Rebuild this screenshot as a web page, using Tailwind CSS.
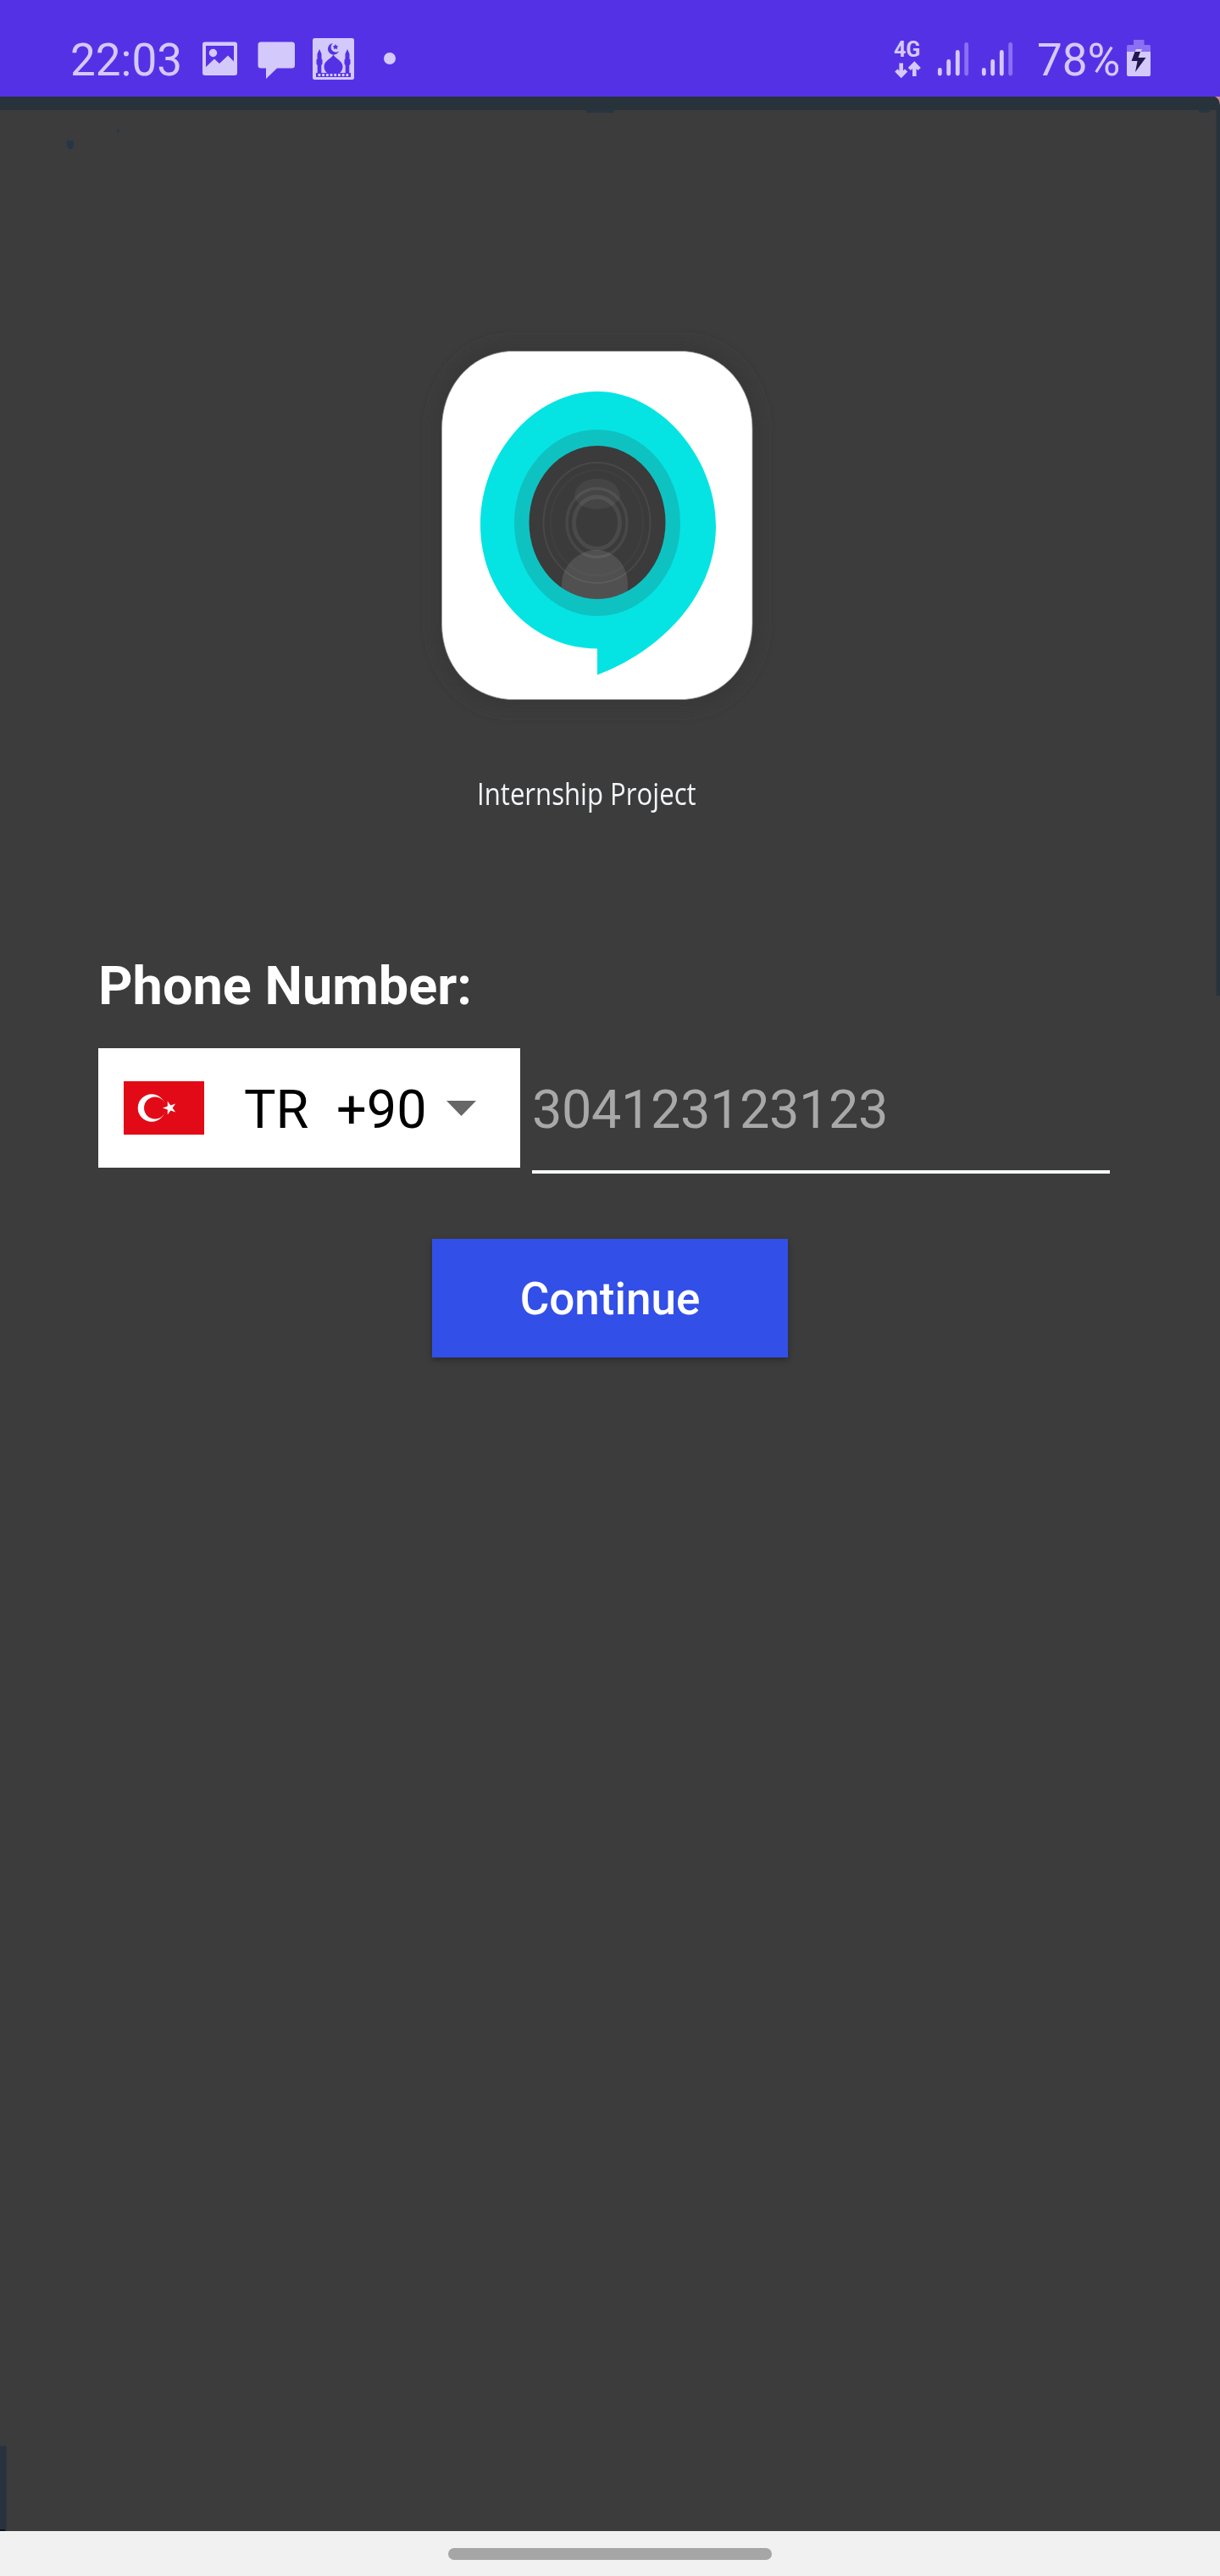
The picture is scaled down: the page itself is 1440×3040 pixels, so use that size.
<!DOCTYPE html>
<html lang="en">
<head>
<meta charset="utf-8">
<title>Internship Project</title>
<script src="https://cdn.jsdelivr.net/npm/@tailwindcss/browser@4"></script>
</head>
<body class="w-[1440px] h-[3040px] flex flex-col overflow-hidden bg-[#3c3c3c] font-['Roboto',sans-serif]">
<header class="h-[114px] shrink-0 bg-[#5531e6] text-[#d4c9fb] flex justify-between pl-[82px] pr-[81px]">
  <div class="flex">
    <span class="w-[150px] mt-[40px] pl-px text-[53px] leading-[62px] whitespace-nowrap">22:03</span>
    <svg class="w-[260px] h-[114px]" viewBox="232 0 260 114" fill="#d4c9fb">
      <path fill-rule="evenodd" d="M242 49.500h35a3 3 0 0 1 3 3v33.500a3 3 0 0 1-3 3h-35a3 3 0 0 1-3-3v-33.500a3 3 0 0 1 3-3zM243 54v25l10-9.500 6 5.500 10-9.500 7 7v-18.500z"/>
      <circle cx="251.500" cy="62.500" r="4.700"/>
      <path d="M308 49.500h36.500a3.500 3.500 0 0 1 3.500 3.500v24a3.500 3.500 0 0 1-3.500 3.500H327L314 93V80.500h-6a3.500 3.500 0 0 1-3.500-3.500v-24a3.500 3.500 0 0 1 3.500-3.500z"/>
      <rect x="369" y="45" width="49" height="49" rx="2.500"/>
      <g fill="#5531e6">
        <path d="M393 51a6.800 6.800 0 1 0 7 9.500a5.500 5.500 0 1 1-7-9.500z"/>
        <path d="M396 52l1.100 2 2.300.4-1.600 1.600.3 2.300-2.100-1-2.100 1 .3-2.300-1.600-1.600 2.300-.4z"/>
        <path d="M393.500 64c1 5 11 7 11 14.500 0 3.500-1.500 6-3.500 7.500h-15c-2-1.500-3.500-4-3.500-7.500 0-7.500 10-9.500 11-14.500z"/>
        <path d="M377 58l2.500 5.500v6l1 1v5l-1.200 1.500v9h-4.600v-9L373.500 75.500v-5l1-1v-6zM410 58l2.500 5.500v6l1 1v5l-1.200 1.500v9h-4.600v-9l-1.200-1.500v-5l1-1v-6z"/>
        <path d="M373 86h41v5h-41z"/>
      </g>
      <path d="M375.500 88.500h36" stroke="#d4c9fb" stroke-width="2.800" stroke-dasharray="2.800 1.900"/>
      <circle cx="460" cy="69" r="7"/>
    </svg>
  </div>
  <div class="flex">
    <div class="w-[48px] pt-[45px]">
      <span class="block text-[25px] leading-[27px] font-bold">4G</span>
      <svg class="w-[34px] h-[20px]" viewBox="1055 72 34 20" fill="none" stroke="#d4c9fb" stroke-width="4.600"><path d="M1063.700 74.500V89M1057.800 83l5.900 6 5.900-6M1079.300 90V76M1073.400 81.500l5.900-6 5.900 6"/></svg>
    </div>
    <svg class="w-[118px] h-[114px]" viewBox="1103 0 118 114" stroke="#d4c9fb" stroke-width="4.800" stroke-linecap="round"><path d="M1109.300 82.500v4.500M1119.700 72.500v14.500M1130.300 61.500v25.500M1161.300 82.500v4.500M1171.700 72.500v14.500M1182.300 61.500v25.500"/><path stroke="#8b70f4" d="M1140.700 52.500v34.500M1192.700 52.500v34.500"/></svg>
    <span class="w-[106px] mt-[40px] pl-[3px] text-[53px] leading-[62px] whitespace-nowrap">78%</span>
    <svg class="w-[32px] h-[114px]" viewBox="1327 0 32 114"><path fill="#8b70f4" d="M1338 47h12.500v6h6a1.500 1.500 0 0 1 1.500 1.500V61h-28v-6.500a1.500 1.500 0 0 1 1.500-1.500h6.500z"/><path fill="#d4c9fb" d="M1330 61h28v27a2 2 0 0 1-2 2h-24a2 2 0 0 1-2-2z"/><path fill="#d4c9fb" d="M1341 58h7l-2 4h-7z"/><path fill="#24174f" d="M1339.500 61h6.500l-2.500 7h9l-12.500 17 2.500-13h-7z"/></svg>
  </div>
</header>

<main class="relative h-[2873px] shrink-0 flex flex-col">
  <!-- stray edges of the splash artwork -->
  <svg class="absolute inset-0 w-[1440px] h-[2873px]" viewBox="0 114 1440 2873">
    <path fill="#28323b" d="M0 114h1440v1061h-4.500V130H0z"/>
    <path fill="#283540" d="M692 129h33v4h-33zM1415 129h14l-2 4h-12z"/>
    <path fill="#27354a" d="M79 166h8v6l-2 4h-3l-3-4z"/>
    <path fill="#2d3843" d="M138 148l1 4 3 2-3 4h-1z"/>
    <path fill="#c98b8d" d="M1434 114h6v10q-1-8-6-10z"/>
    <path fill="#28323d" d="M0 2886.500h7.500V2987H0z"/>
    <path fill="#101418" d="M0 2985h6v2H0z"/>
  </svg>

  <svg class="relative mt-[266px] ml-[480px] w-[450px] h-[480px]" viewBox="480 380 450 480">
    <defs>
      <filter id="halo" x="-20%" y="-20%" width="140%" height="140%"><feGaussianBlur stdDeviation="9"/></filter>
      <clipPath id="lens"><ellipse cx="705" cy="616.500" rx="80.500" ry="90.500"/></clipPath>
    </defs>
    <rect x="513" y="406" width="384" height="430" rx="88" ry="100" fill="#383838" filter="url(#halo)"/>
    <path fill="#fff" stroke="#999" stroke-width=".8" d="M601 414.500H808C856 418 888 458 888 506V736C888 784 856 822 808 825.500H601C553 822 521.500 784 521.500 736V506C521.500 458 553 418 601 414.500z"/>
    <path fill="#05e4e3" d="M705 462C779 462 845 540 845 621C845 699 785 766 705 796.500V765.500C630 765.500 567 702 567 619C567 533 633 462 705 462z"/>
    <ellipse cx="705" cy="617" rx="98" ry="110" fill="#0fc2c2"/>
    <ellipse cx="705" cy="616.500" rx="80.500" ry="90.500" fill="#3b3b3b"/>
    <g clip-path="url(#lens)">
      <path fill="#fff" fill-opacity=".11" d="M663 690C663 666 684 649 704 649S741 666 741 690C741 702 738 710 734 716H672C667 710 663 702 663 690z"/>
      <path fill="#fff" fill-opacity=".05" d="M678 587C678 573 690 565 705 565S732 573 732 587C728 596 717 601 705 601S682 596 678 587z"/>
      <g fill="none" stroke="#fff">
        <ellipse cx="704.500" cy="617" rx="63" ry="71" stroke-opacity=".07" stroke-width="2"/>
        <ellipse cx="704.500" cy="617" rx="54.500" ry="62" stroke-opacity=".025" stroke-width="2.500"/>
        <ellipse cx="704.500" cy="617" rx="35.500" ry="40.500" stroke-opacity=".07" stroke-width="3.500"/>
        <ellipse cx="704.500" cy="617" rx="27" ry="30.500" stroke-opacity=".08" stroke-width="5"/>
      </g>
    </g>
  </svg>

  <h1 class="relative mt-[50px] ml-[563px] w-fit h-[52px] origin-left scale-x-[0.853] font-['Open_Sans',sans-serif] text-[36.500px] leading-[52px] text-[#f2f6fa] whitespace-nowrap">Internship Project</h1>

  <form class="relative flex flex-col mt-[165px] px-[116px]">
    <label class="h-[74px] text-[63px] leading-[74px] font-bold text-white whitespace-nowrap">Phone Number:</label>
    <div class="flex mt-[36px] h-[148px]">
      <div class="w-[498px] h-[141px] bg-white flex items-center pl-[30px] text-[63px] leading-[74px] text-black">
        <svg class="w-[95px] h-[63px] shrink-0" viewBox="0 0 95 63"><rect width="95" height="63" fill="#e30a17"/><circle cx="33" cy="31.500" r="16.300" fill="#fff"/><circle cx="37" cy="31.500" r="13" fill="#e30a17"/><path fill="#fff" d="M46 31.500l5.800-1.900v-6l3.600 4.900 5.800-1.900-3.600 4.900 3.600 4.900-5.800-1.900-3.600 4.900v-6z"/></svg>
        <span class="ml-[47px] mt-[5px] w-[109px]">TR</span>
        <span class="mt-[5px] w-[130px]">+90</span>
        <svg class="w-[35px] h-[18px]" viewBox="0 0 35 18"><path fill="#676767" d="M0 0h35L17.500 18z"/></svg>
      </div>
      <div class="ml-[14px] w-[682px] pt-[36px] text-[63px] leading-[74px] tracking-[-0.400px] text-[#a8a8a8] border-b-[4px] border-[#f5f8f8] whitespace-nowrap">304123123123</div>
    </div>
    <button type="button" class="mt-[77px] self-center w-[420px] h-[140px] pt-[2px] bg-[#324fe7] text-white text-[53px] leading-[62px] font-medium shadow-[0_3px_7px_rgba(0,0,0,0.3)]">Continue</button>
  </form>
</main>

<footer class="h-[53px] bg-[#f1f1f1] flex justify-center pt-[20px]"><div class="w-[382px] h-[14px] rounded-full bg-[#a6a6a6]"></div></footer>
</body>
</html>
